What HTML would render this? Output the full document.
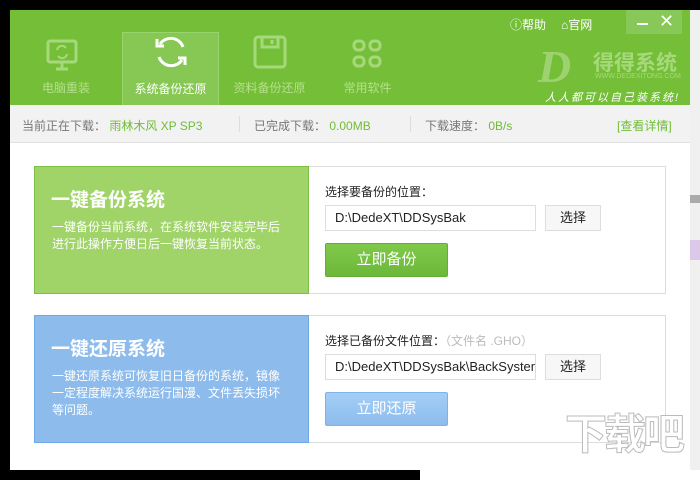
<!DOCTYPE html>
<html style="width:700px;height:480px;overflow:hidden"><head><meta charset="utf-8"><style>
*{margin:0;padding:0;box-sizing:border-box}
body{width:700px;height:480px;background:#000;position:relative;overflow:hidden;font-family:"Liberation Sans","Noto Sans CJK SC",sans-serif}
.abs{position:absolute;white-space:nowrap}
#win{left:10px;top:10px;width:680px;height:460px;background:#fff}
#hdr{left:0;top:0;width:680px;height:95px;background:#75be38}
.tab{top:22px;height:73px;text-align:center;color:#b4e08c;font-size:12px}
.tab span{position:absolute;left:0;right:0;top:47px}
.sel{background:#86c853;border:1px solid #9ad46c;border-bottom:none;color:#fff}
#status{left:0;top:95px;width:680px;height:38px;background:#f2f2f2;border-bottom:1px solid #e0e0e0;font-size:12px;color:#777}
.card{left:24px;width:632px;height:128px;border:1px solid #dcdcdc;background:#fff}
.lp{left:-1px;top:-1px;width:275px;height:128px;color:#fff}
.lp h2{position:absolute;left:16px;top:18px;font-size:19px;font-weight:bold}
.lp p{position:absolute;left:17px;top:52px;font-size:12px;line-height:17px;width:232px;white-space:normal}
.lbl{left:290px;font-size:12px;color:#222}
.inp{left:290px;width:211px;height:26px;border:1px solid #ddd;font-size:13px;color:#222;padding:4px 9px;overflow:hidden}
.btn{left:510px;width:56px;height:26px;border:1px solid #ddd;background:#f7f7f7;font-size:13px;text-align:center;line-height:24px;color:#222}
.big{left:290px;width:123px;height:34px;font-size:15px;color:#fff;text-align:center;line-height:32px;border-radius:2px}
</style></head><body>
<div class="abs" style="left:690px;top:10px;width:10px;height:470px;background:#f0f0f0"></div>
<div class="abs" style="left:686px;top:195px;width:14px;height:8px;background:#aaa"></div>
<div class="abs" style="left:690px;top:240px;width:10px;height:20px;background:#dcc8e8"></div>
<div class="abs" style="left:420px;top:470px;width:280px;height:10px;background:#fff"></div>
<div id="win" class="abs">
 <div id="hdr" class="abs">
  <div class="abs tab" style="left:0;width:112px">
   <svg class="abs" style="left:35px;top:6px" width="34" height="34" viewBox="0 0 34 34" fill="none" stroke="#a6d97c" stroke-width="3"><rect x="3" y="3" width="28" height="21" rx="2"/><path d="M11 31h12M17 24v7"/><path d="M12 12a5 5 0 0 1 9-2M22 16a5 5 0 0 1-9 2" stroke-width="2"/></svg>
   <span>电脑重装</span></div>
  <div class="abs tab sel" style="left:112px;width:97px">
   <svg class="abs" style="left:30px;top:2px" width="36" height="34" viewBox="0 0 36 34" fill="none" stroke="#fff" stroke-width="3"><path d="M30 12A13 13 0 0 0 7 9"/><path d="M6 22a13 13 0 0 0 23 3"/><path d="M4 4v7h7M32 30v-7h-7"/></svg>
   <span>系统备份还原</span></div>
  <div class="abs tab" style="left:211px;width:97px">
   <svg class="abs" style="left:32px;top:3px" width="34" height="34" viewBox="0 0 34 34" fill="none" stroke="#a6d97c" stroke-width="3"><rect x="2" y="2" width="30" height="30" rx="3"/><path d="M9 2v10h16V2M19 5v4"/></svg>
   <span>资料备份还原</span></div>
  <div class="abs tab" style="left:310px;width:95px">
   <svg class="abs" style="left:32px;top:7px" width="30" height="30" viewBox="0 0 30 30" fill="none" stroke="#a6d97c" stroke-width="3"><rect x="2" y="2" width="10" height="9" rx="4"/><rect x="18" y="2" width="10" height="9" rx="4"/><rect x="2" y="18" width="10" height="9" rx="4"/><rect x="18" y="18" width="10" height="9" rx="4"/></svg>
   <span>常用软件</span></div>
  <div class="abs" style="left:500px;top:6px;color:#fff;font-size:12px">ⓘ帮助</div>
  <div class="abs" style="left:551px;top:6px;color:#fff;font-size:12px">⌂官网</div>
  <div class="abs" style="left:616px;top:0;width:56px;height:24px;background:#87c858"></div>
  <div class="abs" style="left:627px;top:13px;width:11px;height:2px;background:#fff"></div>
  <div class="abs" style="left:649px;top:1px;color:#fff;font-size:18px">✕</div>
  <div class="abs" style="left:528px;top:30px;font-size:46px;font-style:italic;font-weight:bold;color:#9ed270;font-family:'Liberation Serif',serif">D</div>
  <div class="abs" style="left:583px;top:37px;font-size:21px;font-weight:bold;color:#a6d97c">得得系统</div>
  <div class="abs" style="left:585px;top:63px;font-size:7px;color:#a6d97c">WWW.DEDEXITONG.COM</div>
  <div class="abs" style="left:535px;top:79px;font-size:11px;color:#fff;font-style:italic;letter-spacing:2px">人人都可以自己装系统!</div>
 </div>
 <div id="status" class="abs">
  <div class="abs" style="left:12px;top:12px">当前正在下载： <span style="color:#6fbd35">雨林木风 XP SP3</span></div>
  <div class="abs" style="left:229px;top:11px;width:1px;height:16px;background:#ddd"></div>
  <div class="abs" style="left:244px;top:12px">已完成下载： <span style="color:#6fbd35">0.00MB</span></div>
  <div class="abs" style="left:400px;top:11px;width:1px;height:16px;background:#ddd"></div>
  <div class="abs" style="left:415px;top:12px">下载速度： <span style="color:#6fbd35">0B/s</span></div>
  <div class="abs" style="left:607px;top:12px;color:#6fbd35">[查看详情]</div>
 </div>
 <div class="abs card" style="top:156px">
  <div class="abs lp" style="background:#a0d468;border:1px solid #7cc043"><h2>一键备份系统</h2><p>一键备份当前系统，在系统软件安装完毕后进行此操作方便日后一键恢复当前状态。</p></div>
  <div class="abs lbl" style="top:16px">选择要备份的位置：</div>
  <div class="abs inp" style="top:38px">D:\DedeXT\DDSysBak</div>
  <div class="abs btn" style="top:38px">选择</div>
  <div class="abs big" style="top:76px;background:linear-gradient(#80c94a,#6cb83a);border:1px solid #64ad36">立即备份</div>
 </div>
 <div class="abs card" style="top:305px">
  <div class="abs lp" style="background:#8cbbec;border:1px solid #6fa8e6"><h2>一键还原系统</h2><p>一键还原系统可恢复旧日备份的系统，镜像一定程度解决系统运行国漫、文件丢失损坏等问题。</p></div>
  <div class="abs lbl" style="top:16px">选择已备份文件位置：<span style="color:#bbb">（文件名 .GHO）</span></div>
  <div class="abs inp" style="top:38px">D:\DedeXT\DDSysBak\BackSystem</div>
  <div class="abs btn" style="top:38px">选择</div>
  <div class="abs big" style="top:76px;background:linear-gradient(#a4cef6,#8cbcee);border:1px solid #7fb2e8">立即还原</div>
 </div>
</div>
<div class="abs" style="left:565px;top:410px;width:135px;height:70px;overflow:hidden"><div class="abs" style="left:0;top:0;font-size:42px;font-weight:bold;color:rgba(255,255,255,0.9);-webkit-text-stroke:1px #bbb;line-height:50px;letter-spacing:-3px">下载吧</div></div>
</body></html>
